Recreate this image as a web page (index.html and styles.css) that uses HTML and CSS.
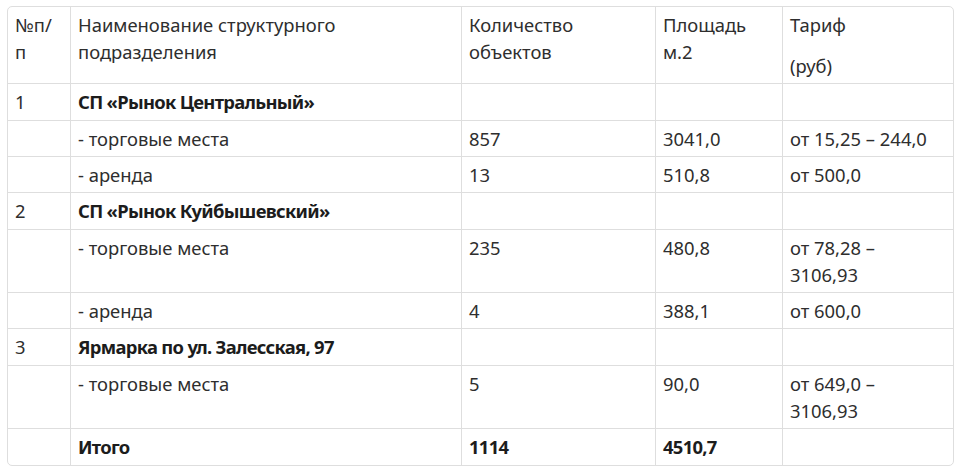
FILE: index.html
```html
<!DOCTYPE html>
<html lang="ru">
<head>
<meta charset="utf-8">
<link rel="stylesheet" href="styles.css">
</head>
<body>
<div class="page">
<table class="grid">
  <colgroup>
    <col class="c1"><col class="c2"><col class="c3"><col class="c4"><col class="c5">
  </colgroup>
  <tr class="head">
    <td>№п/<br>п</td>
    <td>Наименование структурного<br>подразделения</td>
    <td>Количество<br>объектов</td>
    <td>Площадь<br>м.2</td>
    <td><p class="p1">Тариф</p><p>(руб)</p></td>
  </tr>
  <tr class="bold">
    <td>1</td><td><b>СП «Рынок Центральный»</b></td><td></td><td></td><td></td>
  </tr>
  <tr>
    <td></td><td>- торговые места</td><td>857</td><td>3041,0</td><td>от 15,25 – 244,0</td>
  </tr>
  <tr>
    <td></td><td>- аренда</td><td>13</td><td>510,8</td><td>от 500,0</td>
  </tr>
  <tr class="bold">
    <td>2</td><td><b>СП «Рынок Куйбышевский»</b></td><td></td><td></td><td></td>
  </tr>
  <tr>
    <td></td><td>- торговые места</td><td>235</td><td>480,8</td><td>от 78,28 –<br>3106,93</td>
  </tr>
  <tr>
    <td></td><td>- аренда</td><td>4</td><td>388,1</td><td>от 600,0</td>
  </tr>
  <tr class="bold">
    <td>3</td><td><b>Ярмарка по ул. Залесская, 97</b></td><td></td><td></td><td></td>
  </tr>
  <tr>
    <td></td><td>- торговые места</td><td>5</td><td>90,0</td><td>от 649,0 –<br>3106,93</td>
  </tr>
  <tr class="bold last">
    <td></td><td><b>Итого</b></td><td><b>1114</b></td><td><b>4510,7</b></td><td></td>
  </tr>
</table>
</div>
</body>
</html>
```
FILE: styles.css
```css
html, body {
  margin: 0;
  padding: 0;
  background: #fff;
}
.page {
  padding: 6px 7px;
}
.grid {
  width: 946px;
  table-layout: fixed;
  border-collapse: separate;
  border-spacing: 0;
  border: 1px solid #dedede;
  border-radius: 5px;
  font-family: "Noto Sans", sans-serif;
  font-size: 18.4px;
  line-height: 27px;
  color: #2e2e2e;
}
.c1 { width: 63px; }
.c2 { width: 391px; }
.c3 { width: 194px; }
.c4 { width: 127px; }
.c5 { width: 170px; }
.grid td {
  vertical-align: top;
  padding: 4px 8px 4px 7px;
  border-right: 1px solid #dedede;
  border-bottom: 1px solid #dedede;
  white-space: nowrap;
}
.grid td:last-child { border-right: none; }
.grid tr.last td { border-bottom: none; }
.grid tr.bold td { padding-bottom: 5px; }
.grid p { margin: 0; }
.grid p.p1 { margin-bottom: 14px; }
.grid b { font-weight: 700; color: #1c1c1c; letter-spacing: -0.7px; }
```
